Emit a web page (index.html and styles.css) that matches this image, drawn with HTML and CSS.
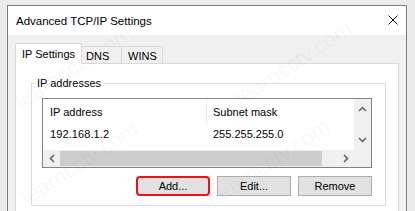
FILE: index.html
```html
<!DOCTYPE html>
<html>
<head>
<meta charset="utf-8">
<link rel="stylesheet" href="styles.css">
</head>
<body>
<div class="window">
  <div class="titlebar">
    <span class="title">Advanced TCP/IP Settings</span>
    <svg class="close" width="10" height="10" viewBox="0 0 10 10"><path d="M0.5 0.5L9.5 9.5M9.5 0.5L0.5 9.5" stroke="#111" stroke-width="1" fill="none"/></svg>
  </div>
  <div class="body">
    <div class="tabs">
      <div class="tab active">IP Settings</div>
      <div class="tab dns">DNS</div>
      <div class="tab wins">WINS</div>
    </div>
    <div class="panel">
      <fieldset class="group">
        <legend>IP addresses</legend>
        <div class="list">
          <div class="list-main">
            <div class="row head">
              <div class="c1">IP address</div>
              <div class="c2">Subnet mask</div>
            </div>
            <div class="row">
              <div class="c1 ip">192.168.1.2</div>
              <div class="c2 nosep">255.255.255.0</div>
            </div>
          </div>
          <div class="vscroll">
            <svg width="9" height="6" viewBox="0 0 9 6"><path d="M1 5L4.5 1.5L8 5" stroke="#606060" stroke-width="1.5" fill="none"/></svg>
            <svg width="9" height="6" viewBox="0 0 9 6"><path d="M1 1L4.5 4.5L8 1" stroke="#606060" stroke-width="1.5" fill="none"/></svg>
          </div>
          <div class="hscroll">
            <div class="arrow"><svg width="6" height="9" viewBox="0 0 6 9"><path d="M5 1L1.5 4.5L5 8" stroke="#606060" stroke-width="1.5" fill="none"/></svg></div>
            <div class="thumb"></div>
            <div class="track"></div>
            <div class="arrow"><svg width="6" height="9" viewBox="0 0 6 9"><path d="M1 1L4.5 4.5L1 8" stroke="#606060" stroke-width="1.5" fill="none"/></svg></div>
          </div>
          <div class="corner"></div>
        </div>
        <div class="btns">
          <button class="btn hl">Add...</button>
          <button class="btn">Edit...</button>
          <button class="btn">Remove</button>
        </div>
      </fieldset>
    </div>
  </div>
  <span class="wm wm1">learncctv.com</span>
  <span class="wm wm2">learncctv.com</span>
  <span class="wm wm3">learncctv.com</span>
  <span class="wm wm4">learncctv.com</span>
</div>
</body>
</html>
```
FILE: styles.css
```css
* { box-sizing: border-box; }
html, body { margin: 0; padding: 0; }
body {
  background: #ebebeb;
  width: 415px;
  height: 211px;
  overflow: hidden;
  font-family: "Liberation Sans", Arial, sans-serif;
  font-size: 11px;
  color: #000;
}
.window {
  position: relative;
  margin: 5px 0 0 7px;
  width: 400px;
  height: 210px;
  border: 1px solid #7c7c7c;
  border-bottom: 0;
  background: #f0f0f0;
  overflow: hidden;
}
.titlebar {
  height: 29px;
  background: #fff;
  display: flex;
  align-items: center;
  justify-content: space-between;
  padding: 0 8px 0 8px;
}
.title { font-size: 11.5px; line-height: 16px; }
.close { display: block; margin-top: -1px; }
.body { padding: 8px 7px 0 7px; }
.tabs {
  display: flex;
  align-items: flex-end;
  height: 21px;
  margin-bottom: -1px;
  position: relative;
  z-index: 1;
}
.tab {
  border: 1px solid #d9d9d9;
  border-bottom: 0;
  background: #f0f0f0;
  line-height: 16px;
  white-space: nowrap;
}
.tab.active {
  width: 67px;
  height: 21px;
  background: #fff;
  padding: 2px 0 0 6px;
}
.tab.dns, .tab.wins {
  height: 17px;
  margin-bottom: 1px;
  border-left: 0;
  padding-top: 1px;
}
.tab.dns { width: 40px; padding-left: 4px; }
.tab.wins { width: 41px; padding-left: 6px; }
.panel {
  background: #fff;
  border: 1px solid #d9d9d9;
  height: 160px;
  padding: 11px 12px 0 15px;
}
.group {
  margin: 0;
  border: 1px solid #dcdcdc;
  padding: 0 13px 9px 10px;
  min-width: 0;
}
.group legend {
  padding: 0 2px;
  margin-left: -7px;
  line-height: 16px;
}
.list {
  margin-top: 7px;
  height: 70px;
  border: 1px solid #828282;
  display: grid;
  grid-template-columns: 1fr 17px;
  grid-template-rows: 51px 17px;
  background: #fff;
}
.list-main { overflow: hidden; }
.row { display: flex; height: 22px; align-items: center; white-space: nowrap; }
.row.head { height: 24px; padding-top: 2px; }
.c1 { width: 163px; flex: none; padding-left: 7px; }
.c1.ip { letter-spacing: 0.1px; }
.c2 { padding-left: 6px; border-left: 1px solid #e5e5e5; height: 100%; display: flex; align-items: center; }
.c2.nosep { border-left-color: transparent; }
.vscroll {
  background: #f0f0f0;
  display: flex;
  flex-direction: column;
  justify-content: space-between;
  align-items: center;
  padding: 7px 0 7px 0;
}
.vscroll svg, .arrow svg { display: block; }
.hscroll {
  background: #f0f0f0;
  display: flex;
  align-items: stretch;
}
.arrow {
  width: 17px;
  flex: none;
  display: flex;
  align-items: center;
  justify-content: center;
}
.thumb { width: 262px; flex: none; background: #cdcdcd; margin: 1px 0; }
.track { flex: 1; }
.corner { background: #f0f0f0; }
.btns {
  display: flex;
  justify-content: flex-end;
  gap: 7px;
  margin-top: 8px;
}
.btn {
  width: 74px;
  height: 20px;
  background: #e1e1e1;
  border: 1px solid #adadad;
  font-family: "Liberation Sans", Arial, sans-serif;
  font-size: 11px;
  color: #000;
  padding: 0;
  line-height: 16px;
}
.btn.hl {
  border: 2px solid #e8141b;
  border-radius: 4px;
}
.wm {
  position: absolute;
  font-family: "Liberation Sans", sans-serif;
  font-size: 22px;
  line-height: 24px;
  color: rgba(0, 0, 0, 0.04);
  transform: rotate(-33deg);
  transform-origin: left bottom;
  white-space: nowrap;
  pointer-events: none;
}
.wm1 { left: 16px; top: 84px; }
.wm2 { left: 236px; top: 80px; }
.wm3 { left: 22px; top: 180px; }
.wm4 { left: 214px; top: 178px; }
```
